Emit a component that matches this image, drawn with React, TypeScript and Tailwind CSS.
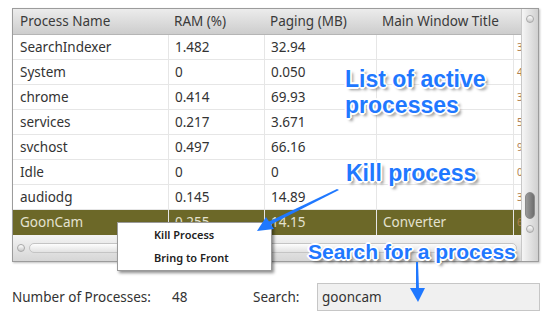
import React from "react";

const rows = [
  { name: "SearchIndexer", ram: "1.482", paging: "32.94", title: "", extra: "3" },
  { name: "System", ram: "0", paging: "0.050", title: "", extra: "4" },
  { name: "chrome", ram: "0.414", paging: "69.93", title: "", extra: "3" },
  { name: "services", ram: "0.217", paging: "3.671", title: "", extra: "5" },
  { name: "svchost", ram: "0.497", paging: "66.16", title: "", extra: "9" },
  { name: "Idle", ram: "0", paging: "0", title: "", extra: "0" },
  { name: "audiodg", ram: "0.145", paging: "14.89", title: "", extra: "3" },
  { name: "GoonCam", ram: "0.255", paging: "14.15", title: "Converter", extra: "6" },
];

const callout =
  "absolute font-['Liberation_Sans',Arial,sans-serif] font-bold text-[#1f78ff] leading-none [text-shadow:1px_1px_0_#fff,-1px_-1px_0_#fff,1px_-1px_0_#fff,-1px_1px_0_#fff,2px_0_0_#fff,-2px_0_0_#fff,0_2px_0_#fff,0_-2px_0_#fff,3px_3px_3px_rgba(0,0,0,0.45)]";

export default function App() {
  return (
    <div className="relative h-[327px] w-[550px] overflow-hidden bg-white font-['Noto_Sans',sans-serif] text-[#333]">
      {/* process grid */}
      <div className="ml-[12px] mt-[8px] flex h-[254px] w-[527px] border border-[#9c9c9c] shadow-[1px_1px_2px_rgba(0,0,0,0.25)]">
        <div className="flex w-[508px] flex-col overflow-hidden">
          <div className="flex h-[26px] shrink-0 items-center border-b border-[#b5b5b5] bg-gradient-to-b from-[#ececec] to-[#cdcdcd] text-[13.5px] text-[#3a3a3a]">
            <div className="w-[155px] shrink-0 pl-[7px]">Process Name</div>
            <div className="w-[96px] shrink-0 pl-[6px]">RAM (%)</div>
            <div className="w-[112px] shrink-0 pl-[6px]">Paging (MB)</div>
            <div className="w-[137px] shrink-0 pl-[6px]">Main Window Title</div>
            <div className="w-[8px] shrink-0 overflow-hidden border-l border-[#aaa] bg-[#c9a070]" />
          </div>
          {rows.map((r) => {
            const sel = r.name === "GoonCam";
            return (
              <div
                key={r.name}
                className={
                  sel
                    ? "flex h-[25px] shrink-0 items-center bg-[#6c6828] text-[13.5px] text-[#e4e2d0]"
                    : "flex h-[25px] shrink-0 items-center border-b border-[#e6e6e6] text-[13.5px]"
                }
              >
                <div className="flex h-full w-[155px] shrink-0 items-center pl-[7px]">{r.name}</div>
                <div className="flex h-full w-[96px] shrink-0 items-center border-l border-[#e6e6e6] pl-[6px]">{r.ram}</div>
                <div className="flex h-full w-[112px] shrink-0 items-center border-l border-[#e6e6e6] pl-[6px]">{r.paging}</div>
                <div className="flex h-full w-[137px] shrink-0 items-center border-l border-[#e6e6e6] pl-[6px]">{r.title}</div>
                <div className="flex h-full w-[8px] shrink-0 items-center overflow-hidden border-l border-[#e6e6e6] pl-[3px] text-[10px] text-[#b08050]">
                  {r.extra}
                </div>
              </div>
            );
          })}
          {/* horizontal scrollbar */}
          <div className="flex flex-1 items-center gap-[4px] bg-gradient-to-b from-[#f4f4f4] to-[#d6d6d6] pl-[4px] pr-[4px]">
            <div className="h-[8px] w-[8px] rounded-full border border-[#a8a8a8] bg-gradient-to-b from-white to-[#c8c8c8]" />
            <div className="h-[10px] flex-1 rounded-full border border-[#c4c4c4] bg-gradient-to-b from-[#fdfdfd] to-[#e2e2e2]" />
          </div>
        </div>
        {/* vertical scrollbar */}
        <div className="flex w-[17px] flex-col items-center border-l border-[#c8c8c8] bg-gradient-to-r from-[#f6f6f6] to-[#d0d0d0] py-[6px]">
          <div className="h-[8px] w-[8px] rounded-full border border-[#a8a8a8] bg-gradient-to-b from-white to-[#c8c8c8]" />
          <div className="flex-1" />
          <div className="h-[27px] w-[10px] rounded-full border border-[#8a8a8a] bg-gradient-to-r from-[#9a9a9a] to-[#6e6e6e]" />
          <div className="mt-[6px] h-[8px] w-[8px] rounded-full border border-[#a8a8a8] bg-gradient-to-b from-white to-[#c8c8c8]" />
          <div className="h-[22px]" />
        </div>
      </div>

      {/* footer */}
      <div className="ml-[12px] mt-[21px] flex h-[28px] items-center text-[13.5px] text-[#333]">
        <div className="w-[160px]">Number of Processes:</div>
        <div className="w-[81px]">48</div>
        <div className="w-[64px]">Search:</div>
        <div className="flex h-[28px] w-[223px] items-center border border-[#c6c6c6] bg-[#f0f0f0] pl-[4px]">gooncam</div>
      </div>

      {/* context menu */}
      <div className="absolute left-[117px] top-[222px] flex h-[49px] w-[155px] flex-col justify-center gap-[6px] border border-[#9a9a9a] bg-white pl-[36px] text-[11px] font-semibold text-[#222] shadow-[2px_2px_3px_rgba(0,0,0,0.45)]">
        <div>Kill Process</div>
        <div>Bring to Front</div>
      </div>

      {/* callouts */}
      <div className={callout + " left-[345px] top-[68px] text-[23px]"}>List of active</div>
      <div className={callout + " left-[345px] top-[94px] text-[23px]"}>processes</div>
      <div className={callout + " left-[346px] top-[162px] text-[23px]"}>Kill process</div>
      <div className={callout + " left-[308px] top-[241px] text-[21px]"}>Search for a process</div>

      <svg className="absolute left-0 top-0" width="550" height="327">
        <polygon points="339,190 337,189 268,222 270,225" fill="#1f78ff" />
        <polygon points="257,231 266,217 274,229" fill="#1f78ff" />
        <polygon points="416,262 418,262 419,290 416,290" fill="#1f78ff" />
        <polygon points="410,288 425,288 418,302" fill="#1f78ff" />
      </svg>
    </div>
  );
}
